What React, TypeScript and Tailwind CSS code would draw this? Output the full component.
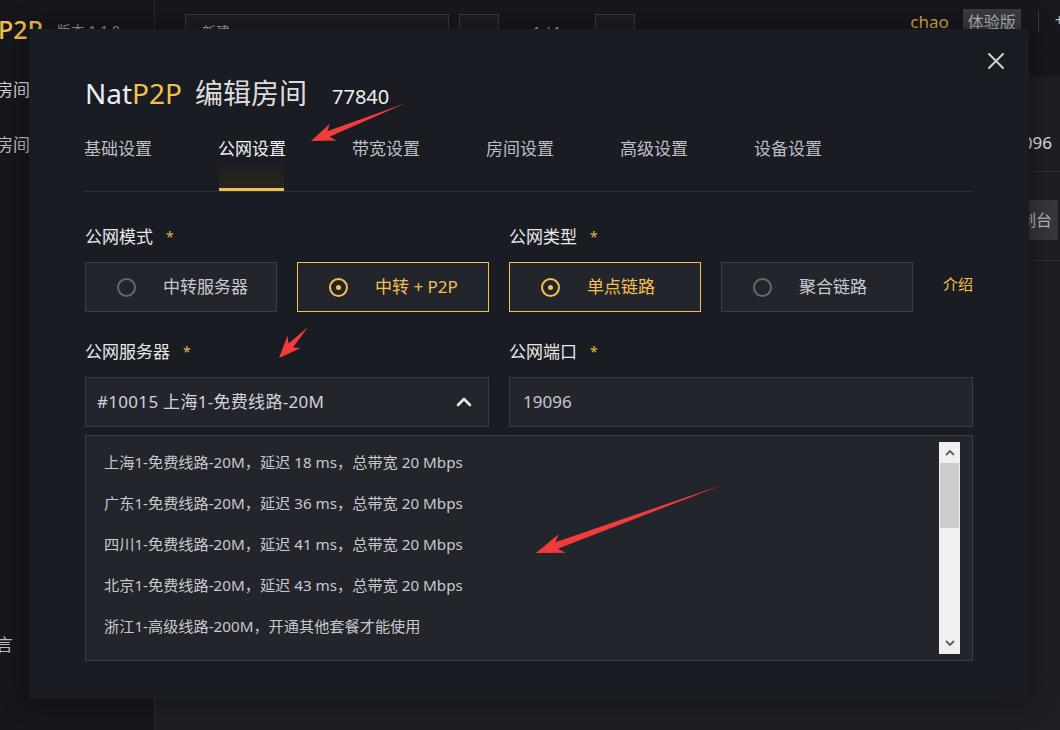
import React from "react";

type Pt = { x: number; y: number };

function arrowPoints(tail: Pt, tip: Pt, headLen: number, headHalf: number, shaftHalf: number) {
  const dx = tip.x - tail.x;
  const dy = tip.y - tail.y;
  const len = Math.sqrt(dx * dx + dy * dy);
  const ux = dx / len;
  const uy = dy / len;
  const nx = -uy;
  const ny = ux;
  const p = (along: number, side: number) => `${tip.x - ux * along + nx * side},${tip.y - uy * along + ny * side}`;
  return [
    `${tail.x},${tail.y}`,
    p(headLen * 0.78, shaftHalf),
    p(headLen, headHalf),
    `${tip.x},${tip.y}`,
    p(headLen, -headHalf),
    p(headLen * 0.78, -shaftHalf),
  ].join(" ");
}

const Radio = ({ label, active }: { label: string; active?: boolean }) => (
  <div
    className={`w-[192px] h-[50px] flex items-center pl-[31px] bg-[#23252d] border ${
      active ? "border-[#f3c14b]" : "border-[#3b3d45]"
    }`}
  >
    {active ? (
      <div className="w-[19px] h-[19px] rounded-full border-2 border-[#f3c14b] flex items-center justify-center">
        <div className="w-[5px] h-[5px] rounded-full bg-[#f3c14b]" />
      </div>
    ) : (
      <div className="w-[19px] h-[19px] rounded-full border-2 border-[#66686e]" />
    )}
    <span className={`ml-[27px] text-[17px] leading-[24px] ${active ? "text-[#f3c14b]" : "text-[#c9cacd]"}`}>
      {label}
    </span>
  </div>
);

const Label = ({ text }: { text: string }) => (
  <div className="flex items-center h-[24px] text-[17px] leading-[24px] text-[#e8e8e8]">
    <span>{text}</span>
    <span className="ml-[13px] text-[14px] text-[#e0b84a]">*</span>
  </div>
);

const tabs = ["基础设置", "公网设置", "带宽设置", "房间设置", "高级设置", "设备设置"];

const items = [
  "上海1-免费线路-20M，延迟 18 ms，总带宽 20 Mbps",
  "广东1-免费线路-20M，延迟 36 ms，总带宽 20 Mbps",
  "四川1-免费线路-20M，延迟 41 ms，总带宽 20 Mbps",
  "北京1-免费线路-20M，延迟 43 ms，总带宽 20 Mbps",
  "浙江1-高级线路-200M，开通其他套餐才能使用",
];

export default function App() {
  const arrows = [
    { tail: { x: 406, y: 103 }, tip: { x: 311, y: 141 }, h: 24, w: 9, s: 3 },
    { tail: { x: 308, y: 327 }, tip: { x: 279, y: 358 }, h: 22, w: 9, s: 3 },
    { tail: { x: 722, y: 485 }, tip: { x: 536, y: 553 }, h: 28, w: 10, s: 3.5 },
  ];
  return (
    <div className="relative w-[1060px] h-[730px] overflow-hidden bg-[#17181d] font-['Noto_Sans','Noto_Sans_CJK_SC',sans-serif]">
      {/* background app */}
      <div className="flex w-full h-full">
        <div className="w-[155px] h-full border-r border-[#2a2b31] bg-[#16171c] flex flex-col">
          <div className="h-[60px] flex items-center -ml-[2px]">
            <span className="text-[25px] font-medium text-[#f3c14b]">P2P</span>
            <span className="ml-[14px] text-[14px] text-[#9a9ba0]">版本 1.1.0</span>
          </div>
          <div className="mt-[18px] -ml-[4px] text-[17px] leading-[24px] text-[#d6d6d6]">房间</div>
          <div className="mt-[31px] -ml-[4px] text-[17px] leading-[24px] text-[#bdbdbd]">房间</div>
          <div className="mt-[476px] -ml-[4px] text-[17px] leading-[24px] text-[#bdbdbd]">言</div>
        </div>
        <div className="flex-1 flex flex-col">
          <div className="h-[76px] flex items-start pt-[9px] pl-[30px]">
            <div className="mt-[5px] w-[264px] h-[36px] border border-[#3a3b40] bg-[#1d1e23] pl-[16px] text-[14px] text-[#aaa] leading-[34px]">新建</div>
            <div className="mt-[5px] ml-[10px] w-[40px] h-[36px] border border-[#3a3b40] bg-[#1d1e23]" />
            <div className="mt-[5px] w-[96px] h-[36px] text-center text-[14px] text-[#aaa] leading-[36px]">1 / 1</div>
            <div className="mt-[5px] w-[40px] h-[36px] border border-[#3a3b40] bg-[#1d1e23]" />
            <div className="flex-1" />
            <span className="mt-[1px] text-[17px] leading-[24px] text-[#d9a93f]">chao</span>
            <span className="ml-[14px] px-[5px] h-[28px] bg-[#3a3c42] text-[16px] leading-[26px] text-[#b5b6b9]">体验版</span>
            <div className="ml-[17px] mt-[1px] w-px h-[22px] bg-[#3a3b40]" />
            <span className="ml-[16px] -mr-[4px] text-[16px] leading-[22px] text-[#bbb]">+</span>
          </div>
          <div className="flex-1 bg-[#1e1f25] flex flex-col">
            <div className="h-[96px] border-b border-[#2f3036] flex items-end justify-end pr-[8px] pb-[16px] text-[17px] leading-[24px] text-[#e0e0e0]">19096</div>
            <div className="h-[89px] border-b border-[#2f3036] flex items-start justify-end pt-[28px] pr-[2px]">
              <div className="h-[40px] px-[6px] bg-[#35373d] text-[16px] leading-[40px] text-[#b8b8b8]">控制台</div>
            </div>
          </div>
        </div>
      </div>

      {/* modal */}
      <div className="absolute left-[29px] top-[29px] w-[1000px] h-[670px] bg-[#1a1c23] shadow-[0_0_26px_rgba(0,0,0,0.45)] px-[56px] pt-[48px]">
        <button className="absolute right-[24px] top-[23px] w-[18px] h-[18px]">
          <svg width="18" height="18" viewBox="0 0 18 18">
            <path d="M2 2 L16 16 M16 2 L2 16" stroke="#cfd0d3" strokeWidth="2" strokeLinecap="round" />
          </svg>
        </button>
        <div className="flex items-baseline h-[32px]">
          <span className="text-[28px] leading-[32px] text-[#ececec]">
            Nat<span className="text-[#f3c14b]">P2P</span>
          </span>
          <span className="ml-[13px] text-[28px] leading-[32px] text-[#dcdcdc]">编辑房间</span>
          <span className="ml-[25px] text-[20px] leading-[32px] text-[#eeeeee]">77840</span>
        </div>

        <div className="mt-[28px] -ml-[1px] flex gap-[66px] border-b border-[#2e3038]">
          {tabs.map((t, i) => (
            <div key={t} className="flex flex-col">
              <span className={`text-[17px] leading-[24px] ${i === 1 ? "text-[#f2f2f2]" : "text-[#bdbec2]"}`}>{t}</span>
              <div className="h-[4px]" />
              {i === 1 ? (
                <>
                  <div className="ml-[1px] w-[65px] h-[23px] bg-gradient-to-b from-[#1f1f20] to-[#28251e]" />
                  <div className="ml-[1px] w-[65px] h-[3px] bg-[#f3c14b]" />
                </>
              ) : (
                <div className="h-[26px]" />
              )}
            </div>
          ))}
        </div>

        <div className="mt-[33px] grid grid-cols-[404px_464px] gap-x-[20px]">
          <div className="flex flex-col">
            <Label text="公网模式" />
            <div className="mt-[13px] flex gap-[20px]">
              <Radio label="中转服务器" />
              <Radio label="中转 + P2P" active />
            </div>
          </div>
          <div className="flex flex-col">
            <Label text="公网类型" />
            <div className="mt-[13px] flex items-center gap-[20px]">
              <Radio label="单点链路" active />
              <Radio label="聚合链路" />
              <span className="ml-auto -mt-[5px] text-[15px] text-[#f3c14b]">介绍</span>
            </div>
          </div>

          <div className="mt-[28px] flex flex-col">
            <Label text="公网服务器" />
            <div className="mt-[13px] h-[50px] bg-[#23252d] border border-[#3b3d45] flex items-center justify-between pl-[11px] pr-[16px]">
              <span className="text-[17px] tracking-[0.3px] text-[#d2d3d6]">#10015 上海1-免费线路-20M</span>
              <svg width="16" height="10" viewBox="0 0 16 10">
                <path d="M2 8 L8 2 L14 8" fill="none" stroke="#e8e8e8" strokeWidth="2.6" strokeLinecap="round" strokeLinejoin="round" />
              </svg>
            </div>
          </div>
          <div className="mt-[28px] flex flex-col">
            <Label text="公网端口" />
            <div className="mt-[13px] h-[50px] bg-[#23252d] border border-[#3b3d45] flex items-center pl-[13px]">
              <span className="text-[17px] text-[#c6c7ca]">19096</span>
            </div>
          </div>
        </div>

        <div className="mt-[8px] h-[226px] bg-[#23252d] border border-[#3b3d45] flex">
          <div className="flex-1 pt-[6px] pl-[18px]">
            {items.map((t) => (
              <div key={t} className="h-[41px] flex items-center text-[15.2px] text-[#c8c9cc]">
                {t}
              </div>
            ))}
          </div>
          <div className="mt-[6px] mr-[12px] w-[21px] h-[212px] bg-[#f0f0f0] flex flex-col items-center">
            <div className="h-[21px] flex items-center justify-center">
              <svg width="10" height="7" viewBox="0 0 10 7">
                <path d="M1 6 L5 2 L9 6" fill="none" stroke="#5f5f5f" strokeWidth="1.8" />
              </svg>
            </div>
            <div className="w-[19px] h-[65px] bg-[#cdcdcd]" />
            <div className="flex-1" />
            <div className="h-[21px] flex items-center justify-center">
              <svg width="10" height="7" viewBox="0 0 10 7">
                <path d="M1 1 L5 5 L9 1" fill="none" stroke="#5f5f5f" strokeWidth="1.8" />
              </svg>
            </div>
          </div>
        </div>
      </div>

      {/* annotation arrows */}
      <svg className="absolute left-0 top-0 pointer-events-none" width="1060" height="730">
        {arrows.map((a, i) => (
          <polygon key={i} points={arrowPoints(a.tail, a.tip, a.h, a.w, a.s)} fill="#f23b3b" />
        ))}
      </svg>
    </div>
  );
}
